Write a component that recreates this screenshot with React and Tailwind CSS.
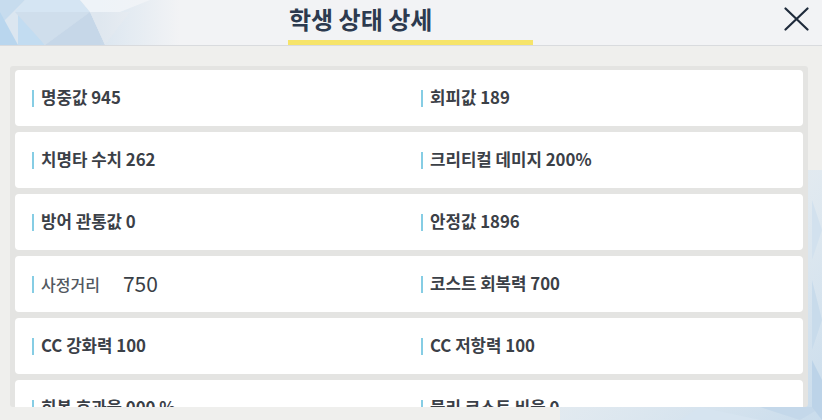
import React from "react";

const rows = [
  [{ t: "명중값 945" }, { t: "회피값 189" }],
  [{ t: "치명타 수치 262" }, { t: "크리티컬 데미지 200%" }],
  [{ t: "방어 관통값 0" }, { t: "안정값 1896" }],
  [{ special: true, label: "사정거리", value: "750" }, { t: "코스트 회복력 700" }],
  [{ t: "CC 강화력 100" }, { t: "CC 저항력 100" }],
  [{ t: "회복 효과율 000 %" }, { t: "물리 코스트 비율 0" }],
];

function Cell({ item }) {
  return (
    <div className="flex items-center">
      <span className="w-[2px] h-[17px] bg-[#86cde4] mr-[7px] shrink-0" />
      {item.special ? (
        <span className="flex items-center">
          <span className="text-[16px] text-[#52585f] font-medium">{item.label}</span>
          <span className="ml-[23px] text-[21px] text-[#3a3f46] font-normal">{item.value}</span>
        </span>
      ) : (
        <span className="text-[16.8px] font-bold text-[#3b4047]">{item.t}</span>
      )}
    </div>
  );
}

export default function App() {
  return (
    <div className="relative w-[822px] h-[420px] overflow-hidden bg-[#efefed] font-['Noto_Sans_CJK_KR','Noto_Sans',sans-serif]">
      {/* decorative background triangles */}
      <svg className="absolute left-0 top-0 pointer-events-none" width="822" height="420" viewBox="0 0 822 420">
        <defs>
          <linearGradient id="fadeR" x1="0" y1="0" x2="1" y2="1">
            <stop offset="0" stopColor="#dbe7f1" stopOpacity="0" />
            <stop offset="0.5" stopColor="#dbe7f1" stopOpacity="0.7" />
            <stop offset="1" stopColor="#c9dcec" stopOpacity="1" />
          </linearGradient>
        </defs>
        <rect x="560" y="170" width="262" height="250" fill="url(#fadeR)" />
        <polygon points="812,200 822,230 812,260" fill="#d2e1ee" />
        <polygon points="812,280 822,320 812,350" fill="#c8dbeb" />
        <polygon points="700,407 760,420 680,420" fill="#d6e4f0" />
        <polygon points="760,407 822,407 800,420" fill="#c4d8ea" />
        <polygon points="812,360 822,380 822,420 812,407" fill="#bcd3e8" />
      </svg>

      <header className="relative h-[46px] bg-[#f2f3f5] border-b border-[#d9dbde] flex items-start">
        <svg className="absolute left-0 top-0" width="180" height="45" viewBox="0 0 180 45">
          <defs>
            <linearGradient id="hdrFade" x1="0" y1="0" x2="1" y2="0">
              <stop offset="0" stopColor="#f2f3f5" stopOpacity="0" />
              <stop offset="0.55" stopColor="#f2f3f5" stopOpacity="0" />
              <stop offset="1" stopColor="#f2f3f5" stopOpacity="1" />
            </linearGradient>
          </defs>
          <rect x="0" y="0" width="180" height="45" fill="#dbe6f0" />
          <polygon points="0,0 25,0 0,25" fill="#c7dcee" />
          <polygon points="0,12 18,45 0,45" fill="#b9d6ee" />
          <polygon points="18,12 45,45 18,45" fill="#c2dcf1" />
          <polygon points="15,12 90,12 45,45" fill="#cfdeec" />
          <polygon points="45,45 90,12 105,45" fill="#c6d7e8" />
          <polygon points="25,0 80,0 90,12 15,12" fill="#d5e5f3" />
          <polygon points="80,0 150,0 120,12 90,12" fill="#eef3f8" />
          <polygon points="90,12 130,12 105,45" fill="#dfe7ef" />
          <rect x="0" y="0" width="180" height="45" fill="url(#hdrFade)" />
        </svg>

        <div className="relative ml-[288px] w-[245px] flex flex-col items-start">
          <h1 className="mt-[4px] ml-[1px] text-[24px] leading-[30px] font-bold text-[#2c3a4f]">
            학생 상태 상세
          </h1>
          <div className="mt-[6px] w-[245px] h-[5px] bg-[#f6e46a]" />
        </div>

        <button className="relative ml-auto mr-[13px] mt-[7px] w-[25px] h-[24px]">
          <svg width="25" height="24" viewBox="0 0 25 24">
            <path d="M1.5 1.5 L23.5 22.5 M23.5 1.5 L1.5 22.5" stroke="#1f2b3b" strokeWidth="2.2" strokeLinecap="round" />
          </svg>
        </button>
      </header>

      <main className="relative mt-[20px] ml-[10px] w-[798px] h-[341px] bg-[#e4e4e2] rounded-[3px] overflow-hidden px-[5px] pt-[4px] flex flex-col gap-[6px]">
        {rows.map((r, i) => (
          <div
            key={i}
            className="shrink-0 h-[56px] bg-white rounded-[4px] grid grid-cols-[389px_1fr] items-center pl-[17px]"
          >
            <Cell item={r[0]} />
            <Cell item={r[1]} />
          </div>
        ))}
      </main>
    </div>
  );
}
